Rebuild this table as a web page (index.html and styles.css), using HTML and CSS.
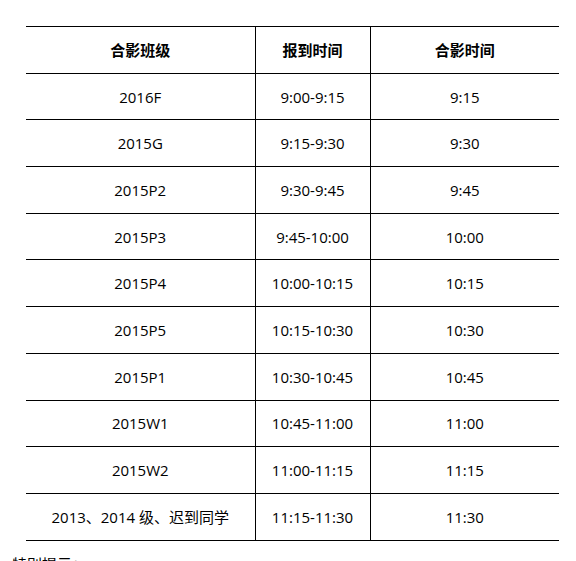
FILE: index.html
```html
<!DOCTYPE html>
<html lang="zh">
<head>
<meta charset="utf-8">
<link rel="stylesheet" href="styles.css">
</head>
<body>
<div class="page">
  <table class="schedule">
    <colgroup>
      <col class="c1"><col class="c2"><col class="c3">
    </colgroup>
    <thead>
      <tr><th>合影班级</th><th>报到时间</th><th>合影时间</th></tr>
    </thead>
    <tbody>
      <tr><td>2016F</td><td>9:00-9:15</td><td>9:15</td></tr>
      <tr><td>2015G</td><td>9:15-9:30</td><td>9:30</td></tr>
      <tr><td>2015P2</td><td>9:30-9:45</td><td>9:45</td></tr>
      <tr><td>2015P3</td><td>9:45-10:00</td><td>10:00</td></tr>
      <tr><td>2015P4</td><td>10:00-10:15</td><td>10:15</td></tr>
      <tr><td>2015P5</td><td>10:15-10:30</td><td>10:30</td></tr>
      <tr><td>2015P1</td><td>10:30-10:45</td><td>10:45</td></tr>
      <tr><td>2015W1</td><td>10:45-11:00</td><td>11:00</td></tr>
      <tr><td>2015W2</td><td>11:00-11:15</td><td>11:15</td></tr>
      <tr><td>2013、2014 级、迟到同学</td><td>11:15-11:30</td><td>11:30</td></tr>
    </tbody>
  </table>
  <p class="note">特别提示：</p>
</div>
</body>
</html>
```
FILE: styles.css
```css
html, body {
  margin: 0;
  padding: 0;
  background: #fff;
}
body {
  font-family: "Open Sans", "Noto Sans CJK SC", sans-serif;
  color: #000;
  font-size: 15px;
}
.page {
  padding: 26px 0 0 12px;
}
.schedule {
  margin-left: 14px;
  border-collapse: collapse;
  table-layout: fixed;
  width: 533px;
}
.c1 { width: 229px; }
.c2 { width: 115px; }
.c3 { width: 189px; }
.schedule th,
.schedule td {
  border-top: 1px solid #000;
  border-bottom: 1px solid #000;
  border-left: 1px solid #000;
  text-align: center;
  vertical-align: middle;
  padding: 0;
  height: 45.7px;
  line-height: 20px;
}
.schedule th:first-child,
.schedule td:first-child {
  border-left: none;
}
.schedule th {
  font-weight: bold;
}
.note {
  margin: 13px 0 0 0;
  font-size: 15px;
  line-height: 20px;
}
```
